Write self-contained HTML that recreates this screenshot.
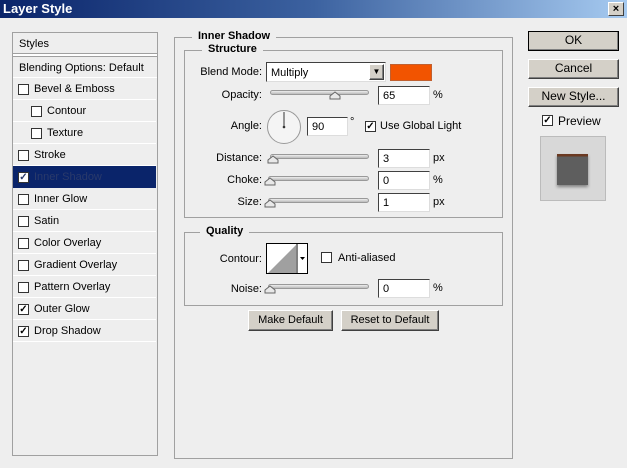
<!DOCTYPE html><html><head><style>
*{margin:0;padding:0;box-sizing:border-box}
body{width:627px;height:468px;background:#eeeeee;font:11px "Liberation Sans",sans-serif;color:#000;position:relative;overflow:hidden}
.a{position:absolute}
.title{left:0;top:0;width:627px;height:18px;background:linear-gradient(90deg,#0a246a,#3c62a0 50%,#a6caf0);color:#fff;font-weight:bold;font-size:13px;padding:1px 3px}
.x{right:3px;top:2px;width:16px;height:14px;background:#d4d0c8;border:1px solid;border-color:#fff #404040 #404040 #fff;color:#000;font-size:11px;font-weight:bold;text-align:center;line-height:12px}
.cb{width:11px;height:11px;border:1px solid #333;background:#fff;font-size:10px;line-height:9px;text-align:center;font-weight:bold}
.row{left:13px;width:143px;height:22px;border-bottom:1px solid #fff;line-height:23px}
.row span{position:absolute;left:21px}
.lbl{text-align:right;width:100px}
.in{background:#fff;border:1px solid;border-color:#404040 #ddd #ddd #404040;padding:3px 4px 2px;height:19px;line-height:13px}
.trk{height:5px;border:1px solid #999;border-radius:3px;background:linear-gradient(#eee,#bbb)}
.btn{background:#d4d0c8;border:1px solid;border-color:#fff #404040 #404040 #fff;text-align:center;line-height:19px;font-size:11px;box-shadow:inset -1px -1px #808080}
.grp{border:1px solid #a0a0a0}
.leg{background:#eee;font-weight:bold;padding:0 6px}
</style></head><body>
<div class="a title">Layer Style</div>
<div class="a x">×</div>

<div class="a" style="left:12px;top:32px;width:146px;height:424px;border:1px solid #a0a0a0"></div>
<div class="a" style="left:13px;top:33px;width:144px;height:21px;line-height:22px;padding-left:6px">Styles</div>
<div class="a" style="left:13px;top:53px;width:144px;height:4px;border-top:1px solid #a0a0a0;border-bottom:1px solid #a0a0a0;background:#fff"></div>
<div class="a" style="left:13px;top:57px;width:144px;height:21px;line-height:22px;padding-left:6px;border-bottom:1px solid #fff">Blending Options: Default</div>

<div class="a row" style="top:78px"><div class="a cb" style="left:5px;top:6px"></div><span>Bevel &amp; Emboss</span></div>
<div class="a row" style="top:100px"><div class="a cb" style="left:18px;top:6px"></div><span style="left:34px">Contour</span></div>
<div class="a row" style="top:122px"><div class="a cb" style="left:18px;top:6px"></div><span style="left:34px">Texture</span></div>
<div class="a row" style="top:144px"><div class="a cb" style="left:5px;top:6px"></div><span>Stroke</span></div>
<div class="a row" style="top:166px;background:#0a246a;color:#2a3a6a;border-bottom-color:#0a246a"><div class="a cb" style="left:5px;top:6px">✓</div><span>Inner Shadow</span></div>
<div class="a row" style="top:188px"><div class="a cb" style="left:5px;top:6px"></div><span>Inner Glow</span></div>
<div class="a row" style="top:210px"><div class="a cb" style="left:5px;top:6px"></div><span>Satin</span></div>
<div class="a row" style="top:232px"><div class="a cb" style="left:5px;top:6px"></div><span>Color Overlay</span></div>
<div class="a row" style="top:254px"><div class="a cb" style="left:5px;top:6px"></div><span>Gradient Overlay</span></div>
<div class="a row" style="top:276px"><div class="a cb" style="left:5px;top:6px"></div><span>Pattern Overlay</span></div>
<div class="a row" style="top:298px"><div class="a cb" style="left:5px;top:6px">✓</div><span>Outer Glow</span></div>
<div class="a row" style="top:320px"><div class="a cb" style="left:5px;top:6px">✓</div><span>Drop Shadow</span></div>

<div class="a grp" style="left:174px;top:37px;width:339px;height:422px"></div>
<div class="a leg" style="left:192px;top:30px">Inner Shadow</div>
<div class="a grp" style="left:184px;top:50px;width:319px;height:168px"></div>
<div class="a leg" style="left:202px;top:43px">Structure</div>

<div class="a lbl" style="left:162px;top:66px">Blend Mode:</div>
<div class="a in" style="left:266px;top:62px;width:120px;height:20px;padding-top:4px">Multiply</div>
<div class="a btn" style="left:369px;top:64px;width:15px;height:16px;line-height:14px;font-size:8px">▼</div>
<div class="a" style="left:390px;top:64px;width:42px;height:17px;background:#f25400;border:1px solid #c06030"></div>

<div class="a lbl" style="left:162px;top:89px">Opacity:</div>
<div class="a trk" style="left:270px;top:90px;width:99px"></div>
<div class="a" style="left:329px;top:91px"><svg width="12" height="9"><path d="M1 8V5L6 1L11 5V8Z" fill="#e8e8e8" stroke="#666"/></svg></div>
<div class="a in" style="left:378px;top:86px;width:52px">65</div>
<div class="a" style="left:433px;top:89px">%</div>

<div class="a lbl" style="left:162px;top:120px">Angle:</div>
<div class="a" style="left:266px;top:109px"><svg width="36" height="36"><circle cx="18" cy="18" r="16.5" fill="#f4f4f4" stroke="#999"/><line x1="18" y1="18" x2="18" y2="3" stroke="#333"/><circle cx="18" cy="18" r="1.3" fill="#333"/></svg></div>
<div class="a in" style="left:307px;top:117px;width:41px">90</div>
<div class="a" style="left:350px;top:116px">°</div>
<div class="a cb" style="left:365px;top:121px">✓</div>
<div class="a" style="left:380px;top:120px">Use Global Light</div>

<div class="a lbl" style="left:162px;top:152px">Distance:</div>
<div class="a trk" style="left:270px;top:154px;width:99px"></div>
<div class="a" style="left:267px;top:155px"><svg width="12" height="9"><path d="M1 8V5L6 1L11 5V8Z" fill="#e8e8e8" stroke="#666"/></svg></div>
<div class="a in" style="left:378px;top:149px;width:52px">3</div>
<div class="a" style="left:433px;top:152px">px</div>

<div class="a lbl" style="left:162px;top:174px">Choke:</div>
<div class="a trk" style="left:268px;top:176px;width:101px"></div>
<div class="a" style="left:264px;top:177px"><svg width="12" height="9"><path d="M1 8V5L6 1L11 5V8Z" fill="#e8e8e8" stroke="#666"/></svg></div>
<div class="a in" style="left:378px;top:171px;width:52px">0</div>
<div class="a" style="left:433px;top:174px">%</div>

<div class="a lbl" style="left:162px;top:196px">Size:</div>
<div class="a trk" style="left:268px;top:198px;width:101px"></div>
<div class="a" style="left:264px;top:199px"><svg width="12" height="9"><path d="M1 8V5L6 1L11 5V8Z" fill="#e8e8e8" stroke="#666"/></svg></div>
<div class="a in" style="left:378px;top:193px;width:52px">1</div>
<div class="a" style="left:433px;top:196px">px</div>

<div class="a grp" style="left:184px;top:232px;width:319px;height:74px"></div>
<div class="a leg" style="left:200px;top:225px">Quality</div>
<div class="a lbl" style="left:162px;top:253px">Contour:</div>
<div class="a" style="left:266px;top:243px;width:42px;height:31px;border:1px solid #000;background:#fff"><svg width="40" height="29" style="position:absolute;left:0;top:0"><path d="M1 29L29 1V29Z" fill="#a0a0a0"/><line x1="30" y1="0" x2="30" y2="29" stroke="#000"/><path d="M33 13h5l-2.5 3z" fill="#000"/></svg></div>
<div class="a cb" style="left:321px;top:252px"></div>
<div class="a" style="left:338px;top:252px">Anti-aliased</div>

<div class="a lbl" style="left:162px;top:283px">Noise:</div>
<div class="a trk" style="left:268px;top:284px;width:101px"></div>
<div class="a" style="left:264px;top:285px"><svg width="12" height="9"><path d="M1 8V5L6 1L11 5V8Z" fill="#e8e8e8" stroke="#666"/></svg></div>
<div class="a in" style="left:378px;top:279px;width:52px">0</div>
<div class="a" style="left:433px;top:282px">%</div>

<div class="a btn" style="left:248px;top:310px;width:85px;height:21px">Make Default</div>
<div class="a btn" style="left:341px;top:310px;width:98px;height:21px">Reset to Default</div>

<div class="a btn" style="left:528px;top:31px;width:91px;height:20px;border:1px solid #000;font-size:12px;line-height:17px">OK</div>
<div class="a btn" style="left:528px;top:59px;width:91px;height:20px;font-size:12px;line-height:17px">Cancel</div>
<div class="a btn" style="left:528px;top:87px;width:91px;height:20px;font-size:12px;line-height:17px">New Style...</div>
<div class="a cb" style="left:542px;top:115px">✓</div>
<div class="a" style="left:558px;top:114px;font-size:12px">Preview</div>
<div class="a" style="left:540px;top:136px;width:66px;height:65px;background:#d8d8d8;border:1px solid #bbb"></div>
<div class="a" style="left:557px;top:154px;width:31px;height:31px;background:linear-gradient(#6b3a22 0,#6b3a22 2px,#5e5e5e 3px);box-shadow:0 2px 3px rgba(0,0,0,.4)"></div>
</body></html>
